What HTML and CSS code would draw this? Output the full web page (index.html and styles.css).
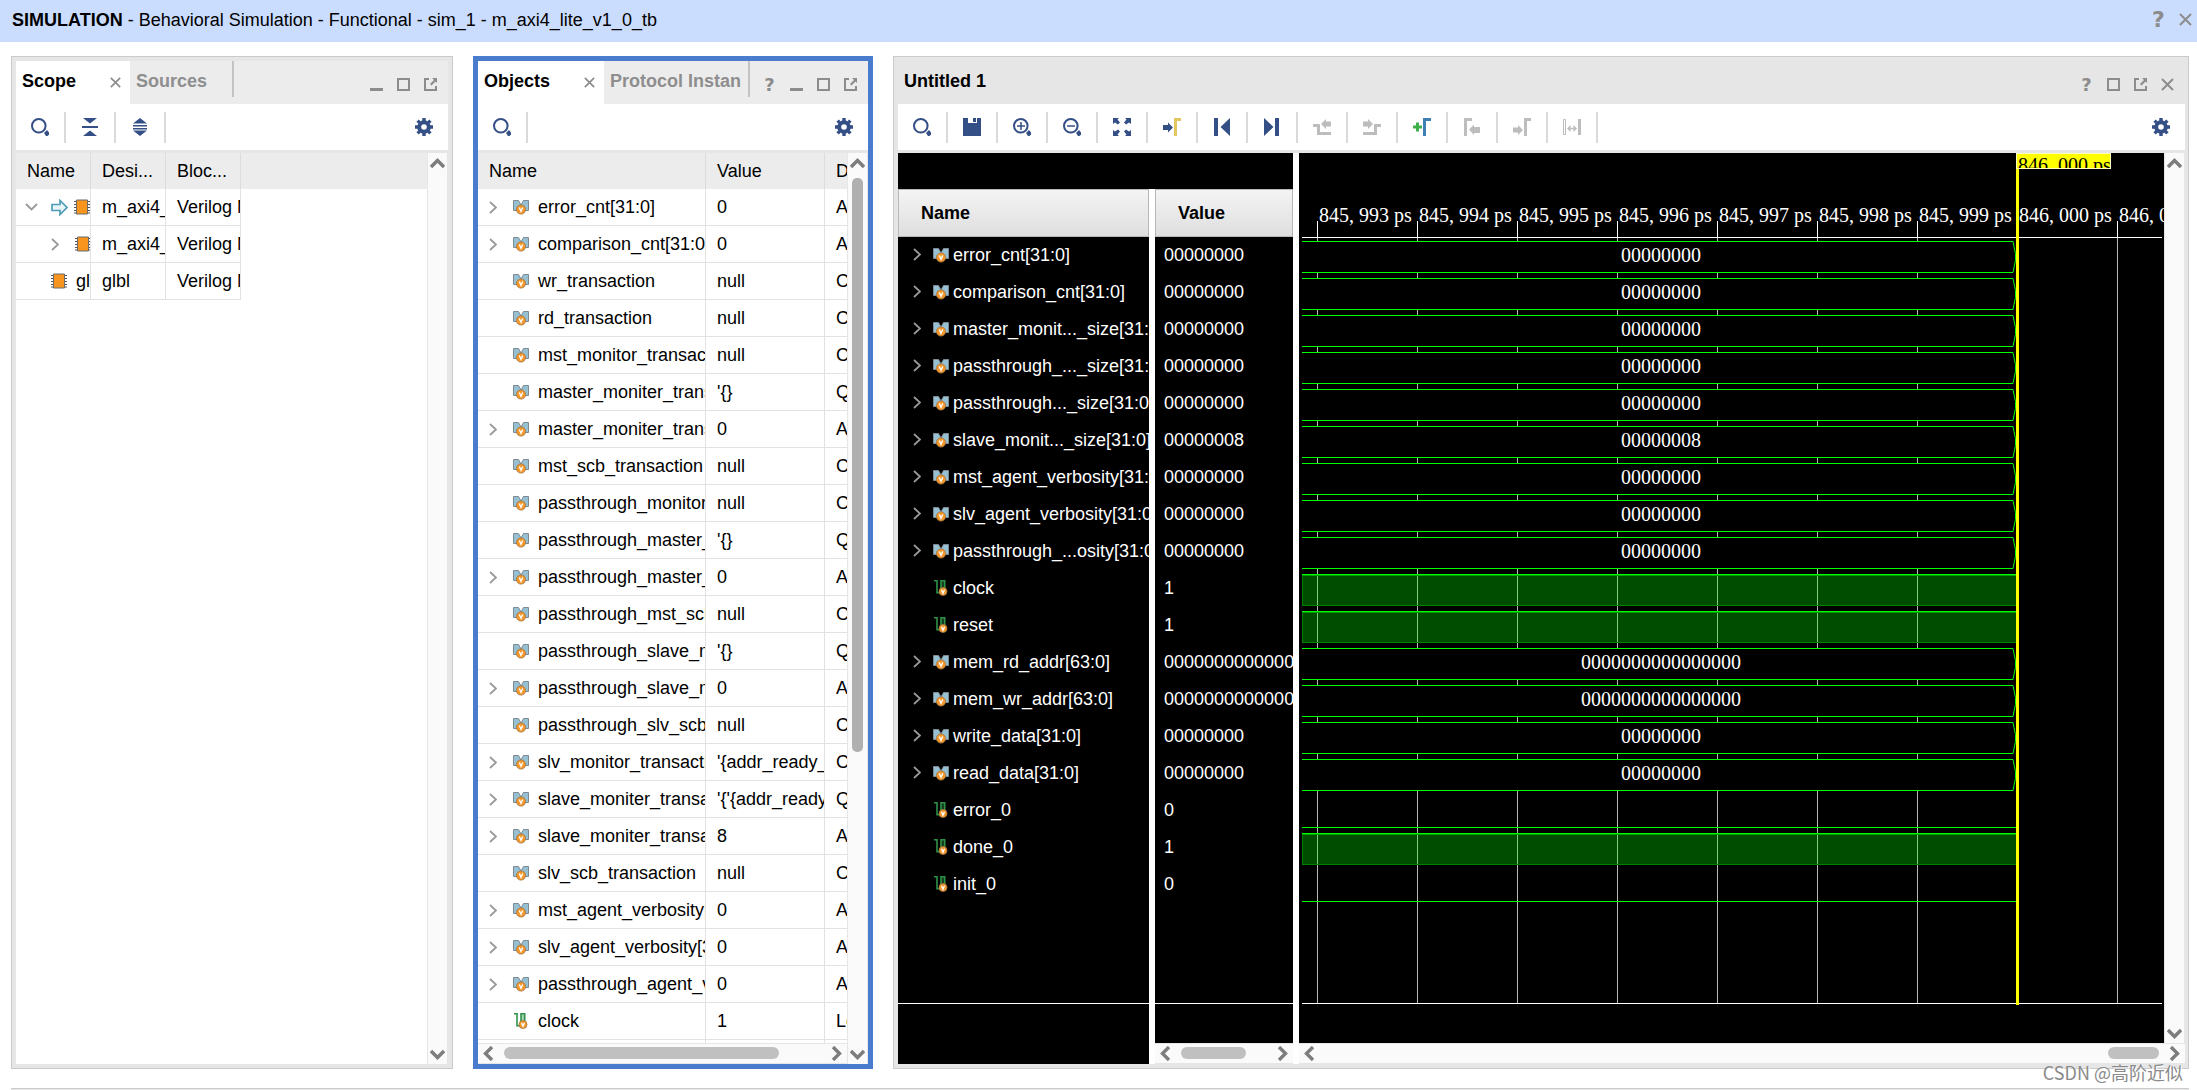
FILE: index.html
```html
<!DOCTYPE html>
<html lang="en">
<head>
<meta charset="utf-8">
<title>Behavioral Simulation - sim_1</title>
<link rel="stylesheet" href="styles.css">
</head>
<body>
<svg class="defs" aria-hidden="true">
  <symbol id="search" viewBox="0 0 18 18"><circle cx="7.800" cy="7.800" r="6.800" fill="none" stroke="currentColor" stroke-width="2"/><path d="M13 15l3-3 2 2.500v2l-1.500 1.500h-1.500z" fill="currentColor"/></symbol>
  <symbol id="zoomin" viewBox="0 0 18 18"><use href="#search"/><path d="M4 8h8M8 4v8" stroke="currentColor" stroke-width="1.500"/></symbol>
  <symbol id="zoomout" viewBox="0 0 18 18"><use href="#search"/><path d="M4 8h8" stroke="currentColor" stroke-width="1.500"/></symbol>
  <symbol id="collapse" viewBox="0 0 18 18"><path d="M2 0h14L9 5.500zM1 8h16v2H1zM2 18h14l-7-5.500z" fill="currentColor"/></symbol>
  <symbol id="expand" viewBox="0 0 18 18"><path d="M2 5.500h14L9 0zM2 7h14v1.500H2zM2 10h14v1.500H2zM2 12.500h14L9 18z" fill="currentColor"/></symbol>
  <symbol id="gear" viewBox="0 0 18 18"><circle cx="9" cy="9" r="4.800" fill="none" stroke="currentColor" stroke-width="4"/><path d="M9 0v3M9 15v3M0 9h3M15 9h3M2.600 2.600l2 2M13.400 13.400l2 2M2.600 15.400l2-2M13.400 4.600l2-2" stroke="currentColor" stroke-width="3.400"/></symbol>
  <symbol id="save" viewBox="0 0 18 18"><path d="M0 0h5v5h9V0h4v18H0zM10 0h3v4h-3z" fill="currentColor"/></symbol>
  <symbol id="fit" viewBox="0 0 18 18"><path d="M0 0h6L4.500 1.500 7 4.500 5 6.500 2 4.500 0 6zM18 0v6l-2-1.500L13 6.500l-2-2 2.500-3L12 0zM0 18v-6l2 1.500L5 11.500l2 2-2.500 3L6 18zM18 18h-6l1.500-1.500-2.500-3 2-2 3 2 2-1.500z" fill="currentColor"/></symbol>
  <symbol id="tocursor" viewBox="0 0 18 18"><path d="M0 7h5V4.500L10 9.500 5 14.500V12H0z" fill="currentColor"/><path d="M11 0h7v3h-4v15h-3z" fill="#e2c660"/></symbol>
  <symbol id="first" viewBox="0 0 18 18"><path d="M1 0h4v18H1zM17 0v18L7.500 9z" fill="currentColor"/></symbol>
  <symbol id="last" viewBox="0 0 18 18"><path d="M12 0h4v18h-4zM1 0v18l9.500-9z" fill="currentColor"/></symbol>
  <symbol id="prevtr" viewBox="0 0 18 18"><path d="M0 7.500h5.500v8H18" fill="none" stroke="currentColor" stroke-width="3"/><path d="M8 6l5-5v2.500h5v5h-5V11z" fill="currentColor"/></symbol>
  <symbol id="nexttr" viewBox="0 0 18 18"><path d="M0 15.500h12.500v-8H18" fill="none" stroke="currentColor" stroke-width="3"/><path d="M10 6L5 1v2.500H0v5h5V11z" fill="currentColor"/></symbol>
  <symbol id="addmark" viewBox="0 0 18 18"><path d="M0 9h9M4.500 4.500v9" stroke="#3fb04a" stroke-width="3"/><path d="M10 0h8v3h-5v15h-3z" fill="#3f80b4"/></symbol>
  <symbol id="prevmark" viewBox="0 0 18 18"><path d="M1 0h8v3H4v15H1zM6 11.500l5-5V9h6v6h-6v2z" fill="currentColor"/></symbol>
  <symbol id="nextmark" viewBox="0 0 18 18"><path d="M11 0h7v3h-4v15h-3zM10 12L5 7v2.500H0v5h5V17z" fill="currentColor"/></symbol>
  <symbol id="swap" viewBox="0 0 18 18"><path d="M.5 1.500h2v15h-2z" fill="none" stroke="currentColor"/><path d="M15 1h3v16h-3zM4 10.500l3.500-3.500v2.700h3V7l3.500 3.500-3.500 3.500v-2.700h-3V14z" fill="currentColor"/></symbol>
  <symbol id="min" viewBox="0 0 13 13"><path d="M0 10h13v3H0z" fill="currentColor"/></symbol>
  <symbol id="max" viewBox="0 0 13 13"><path d="M1 1h11v11H1z" fill="none" stroke="currentColor" stroke-width="2"/></symbol>
  <symbol id="float" viewBox="0 0 13 13"><path d="M5 1H1v11h11V8" fill="none" stroke="currentColor" stroke-width="2"/><path d="M8 0h5v5l-1.500-1.500-4 4L6 6l4-4z" fill="currentColor"/></symbol>
  <symbol id="close" viewBox="0 0 13 13"><path d="M1 1l11 11M12 1L1 12" stroke="currentColor" stroke-width="2"/></symbol>
  <symbol id="up" viewBox="0 0 15 15"><path d="M1 11l6.500-6.500L14 11" fill="none" stroke="currentColor" stroke-width="3.400"/></symbol>
  <symbol id="down" viewBox="0 0 15 15"><path d="M1 5l6.500 6.500L14 5" fill="none" stroke="currentColor" stroke-width="3.400"/></symbol>
  <symbol id="left" viewBox="0 0 15 15"><path d="M11 1L4.500 7.500 11 14" fill="none" stroke="currentColor" stroke-width="3.400"/></symbol>
  <symbol id="right" viewBox="0 0 15 15"><path d="M4 1l6.500 6.500L4 14" fill="none" stroke="currentColor" stroke-width="3.400"/></symbol>
  <symbol id="tw" viewBox="0 0 8 13"><path d="M1 1l6 5.500L1 12" fill="none" stroke="currentColor" stroke-width="1.800"/></symbol>
  <symbol id="twd" viewBox="0 0 13 8"><path d="M1 1l5.500 5.500L12 1" fill="none" stroke="currentColor" stroke-width="1.800"/></symbol>
  <symbol id="arrow" viewBox="0 0 17 17"><path d="M1 5.500h8v-4l7 7-7 7v-4H1z" fill="#e8f6fa" stroke="#4f9cb8" stroke-width="1.700"/></symbol>
  <symbol id="chip" viewBox="0 0 16 16"><path d="M0 2.500h16M0 5.500h16M0 8.500h16M0 11.500h16M0 14h16" stroke="#555"/><path d="M2.500 1h11v14h-11z" fill="#f7951f" stroke="#6b6b6b"/></symbol>
  <symbol id="bus" viewBox="0 0 16 16"><path d="M.5 1.500h5L8 6l-1 5.500H.5zM15.500 1.500h-5L8 6l1 5.500h6.500z" fill="#97c0d3" stroke="#7d8a93"/><circle cx="8" cy="10.500" r="4.600" fill="#f5982c" stroke="#a07440" stroke-width=".8"/><path d="M6.300 8.500L8 12.300l1.700-3.800" fill="none" stroke="#fff" stroke-width="1.400"/></symbol>
  <symbol id="bit" viewBox="0 0 16 16"><path d="M8 1h3.500v9H8z" fill="#2f9148" opacity=".4"/><path d="M1 .8h3v12h4v-12h3.700v10" fill="none" stroke="#2f9148" stroke-width="1.600"/><circle cx="10" cy="11.500" r="4" fill="#f5982c" stroke="#a07440" stroke-width=".8"/><path d="M8.500 9.800l1.500 3.500 1.500-3.500" fill="none" stroke="#fff" stroke-width="1.300"/></symbol>
  <symbol id="busend" viewBox="0 0 4 32"><path d="M0 .5h1l1 5 1.500 7V16v3.500L2 26.500l-1 5H0" fill="#000" stroke="#0f0"/></symbol>
</svg>

<header class="titlebar">
  <h1><b>SIMULATION</b> - Behavioral Simulation - Functional - sim_1 - m_axi4_lite_v1_0_tb</h1>
  <div class="winbtns"><button class="help big" aria-label="Help">?</button><button aria-label="Close"><svg><use href="#close"/></svg></button></div>
</header>

<main class="workspace">
  <section class="panel">
    <div class="tabs">
      <button class="tab active scope-tab">Scope<svg class="x"><use href="#close"/></svg></button>
      <button class="tab sources-tab">Sources</button>
      <div class="winbtns"><button aria-label="Minimize"><svg><use href="#min"/></svg></button><button aria-label="Maximize"><svg><use href="#max"/></svg></button><button aria-label="Float"><svg><use href="#float"/></svg></button></div>
    </div>
    <div class="toolbar">
      <button aria-label="Search"><svg><use href="#search"/></svg></button><button aria-label="Collapse all"><svg><use href="#collapse"/></svg></button><button aria-label="Expand all"><svg><use href="#expand"/></svg></button>
      <button class="settings" aria-label="Settings"><svg><use href="#gear"/></svg></button>
    </div>
    <div class="content">
      <div class="view">
        <table class="grid">
          <colgroup><col class="c-scope"><col class="c-scope"><col class="c-scope"><col></colgroup>
          <thead><tr><th>Name</th><th>Desi...</th><th>Bloc...</th><td></td></tr></thead>
          <tbody>
            <tr><td class="tree"><div><button class="slot"><svg class="twd"><use href="#twd"/></svg></button><svg class="ar"><use href="#arrow"/></svg><svg class="ic"><use href="#chip"/></svg></div></td><td>m_axi4_lite</td><td>Verilog Module</td><td class="rest"></td></tr>
            <tr><td class="tree"><div class="lvl1"><button class="slot"><svg class="tw"><use href="#tw"/></svg></button><svg class="ic"><use href="#chip"/></svg></div></td><td>m_axi4_lite</td><td>Verilog Module</td><td class="rest"></td></tr>
            <tr><td class="tree"><div><span class="slot"></span><svg class="ic"><use href="#chip"/></svg>glbl</div></td><td>glbl</td><td>Verilog Module</td><td class="rest"></td></tr>
          </tbody>
        </table>
      </div>
      <div class="sb v"><button aria-label="Up"><svg><use href="#up"/></svg></button><div class="track"></div><button aria-label="Down"><svg><use href="#down"/></svg></button></div>
    </div>
  </section>

  <section class="panel focused">
    <div class="tabs">
      <button class="tab active objects-tab">Objects<svg class="x"><use href="#close"/></svg></button>
      <button class="tab protocol-tab">Protocol Instan</button>
      <div class="winbtns"><button class="help" aria-label="Help">?</button><button aria-label="Minimize"><svg><use href="#min"/></svg></button><button aria-label="Maximize"><svg><use href="#max"/></svg></button><button aria-label="Float"><svg><use href="#float"/></svg></button></div>
    </div>
    <div class="toolbar">
      <button aria-label="Search"><svg><use href="#search"/></svg></button>
      <button class="settings" aria-label="Settings"><svg><use href="#gear"/></svg></button>
    </div>
    <div class="content">
      <div class="stack">
        <div class="view">
          <table class="grid objects">
            <colgroup><col class="c-name"><col class="c-value"><col></colgroup>
            <thead><tr><th>Name</th><th>Value</th><th>Data Type</th></tr></thead>
            <tbody>
              <tr><td class="sig"><div><button class="slot"><svg class="tw"><use href="#tw"/></svg></button><svg class="ic"><use href="#bus"/></svg>error_cnt[31:0]</div></td><td>0</td><td>Array</td></tr>
              <tr><td class="sig"><div><button class="slot"><svg class="tw"><use href="#tw"/></svg></button><svg class="ic"><use href="#bus"/></svg>comparison_cnt[31:0]</div></td><td>0</td><td>Array</td></tr>
              <tr><td class="sig"><div><span class="slot"></span><svg class="ic"><use href="#bus"/></svg>wr_transaction</div></td><td>null</td><td>Class</td></tr>
              <tr><td class="sig"><div><span class="slot"></span><svg class="ic"><use href="#bus"/></svg>rd_transaction</div></td><td>null</td><td>Class</td></tr>
              <tr><td class="sig"><div><span class="slot"></span><svg class="ic"><use href="#bus"/></svg>mst_monitor_transact</div></td><td>null</td><td>Class</td></tr>
              <tr><td class="sig"><div><span class="slot"></span><svg class="ic"><use href="#bus"/></svg>master_moniter_trans</div></td><td>'{}</td><td>Queue</td></tr>
              <tr><td class="sig"><div><button class="slot"><svg class="tw"><use href="#tw"/></svg></button><svg class="ic"><use href="#bus"/></svg>master_moniter_trans</div></td><td>0</td><td>Array</td></tr>
              <tr><td class="sig"><div><span class="slot"></span><svg class="ic"><use href="#bus"/></svg>mst_scb_transaction</div></td><td>null</td><td>Class</td></tr>
              <tr><td class="sig"><div><span class="slot"></span><svg class="ic"><use href="#bus"/></svg>passthrough_monitor</div></td><td>null</td><td>Class</td></tr>
              <tr><td class="sig"><div><span class="slot"></span><svg class="ic"><use href="#bus"/></svg>passthrough_master_</div></td><td>'{}</td><td>Queue</td></tr>
              <tr><td class="sig"><div><button class="slot"><svg class="tw"><use href="#tw"/></svg></button><svg class="ic"><use href="#bus"/></svg>passthrough_master_</div></td><td>0</td><td>Array</td></tr>
              <tr><td class="sig"><div><span class="slot"></span><svg class="ic"><use href="#bus"/></svg>passthrough_mst_scb</div></td><td>null</td><td>Class</td></tr>
              <tr><td class="sig"><div><span class="slot"></span><svg class="ic"><use href="#bus"/></svg>passthrough_slave_m</div></td><td>'{}</td><td>Queue</td></tr>
              <tr><td class="sig"><div><button class="slot"><svg class="tw"><use href="#tw"/></svg></button><svg class="ic"><use href="#bus"/></svg>passthrough_slave_m</div></td><td>0</td><td>Array</td></tr>
              <tr><td class="sig"><div><span class="slot"></span><svg class="ic"><use href="#bus"/></svg>passthrough_slv_scb</div></td><td>null</td><td>Class</td></tr>
              <tr><td class="sig"><div><button class="slot"><svg class="tw"><use href="#tw"/></svg></button><svg class="ic"><use href="#bus"/></svg>slv_monitor_transacti</div></td><td>'{addr_ready_</td><td>Class</td></tr>
              <tr><td class="sig"><div><button class="slot"><svg class="tw"><use href="#tw"/></svg></button><svg class="ic"><use href="#bus"/></svg>slave_moniter_transa</div></td><td>'{'{addr_ready</td><td>Queue</td></tr>
              <tr><td class="sig"><div><button class="slot"><svg class="tw"><use href="#tw"/></svg></button><svg class="ic"><use href="#bus"/></svg>slave_moniter_transa</div></td><td>8</td><td>Array</td></tr>
              <tr><td class="sig"><div><span class="slot"></span><svg class="ic"><use href="#bus"/></svg>slv_scb_transaction</div></td><td>null</td><td>Class</td></tr>
              <tr><td class="sig"><div><button class="slot"><svg class="tw"><use href="#tw"/></svg></button><svg class="ic"><use href="#bus"/></svg>mst_agent_verbosity[</div></td><td>0</td><td>Array</td></tr>
              <tr><td class="sig"><div><button class="slot"><svg class="tw"><use href="#tw"/></svg></button><svg class="ic"><use href="#bus"/></svg>slv_agent_verbosity[3</div></td><td>0</td><td>Array</td></tr>
              <tr><td class="sig"><div><button class="slot"><svg class="tw"><use href="#tw"/></svg></button><svg class="ic"><use href="#bus"/></svg>passthrough_agent_v</div></td><td>0</td><td>Array</td></tr>
              <tr><td class="sig"><div><span class="slot"></span><svg class="ic"><use href="#bit"/></svg>clock</div></td><td>1</td><td>Logic</td></tr>
              <tr><td></td><td></td><td></td></tr>
            </tbody>
          </table>
        </div>
        <div class="sb h"><button aria-label="Left"><svg><use href="#left"/></svg></button><div class="track"><div class="thumb" style="width:84%"></div></div><button aria-label="Right"><svg><use href="#right"/></svg></button></div>
      </div>
      <div class="sb v"><button aria-label="Up"><svg><use href="#up"/></svg></button><div class="track"><div class="thumb" style="height:66%"></div></div><button aria-label="Down"><svg><use href="#down"/></svg></button></div>
    </div>
  </section>

  <section class="panel viewer">
    <div class="tabs plain">
      <h2>Untitled 1</h2>
      <div class="winbtns"><button class="help" aria-label="Help">?</button><button aria-label="Maximize"><svg><use href="#max"/></svg></button><button aria-label="Float"><svg><use href="#float"/></svg></button><button aria-label="Close"><svg><use href="#close"/></svg></button></div>
    </div>
    <div class="toolbar">
      <button aria-label="Search"><svg><use href="#search"/></svg></button><button aria-label="Save"><svg><use href="#save"/></svg></button><button aria-label="Zoom in"><svg><use href="#zoomin"/></svg></button><button aria-label="Zoom out"><svg><use href="#zoomout"/></svg></button><button aria-label="Zoom fit"><svg><use href="#fit"/></svg></button><button aria-label="Go to cursor"><svg><use href="#tocursor"/></svg></button><button aria-label="Go to start"><svg><use href="#first"/></svg></button><button aria-label="Go to end"><svg><use href="#last"/></svg></button><button class="off" aria-label="Previous transition"><svg><use href="#prevtr"/></svg></button><button class="off" aria-label="Next transition"><svg><use href="#nexttr"/></svg></button><button aria-label="Add marker"><svg><use href="#addmark"/></svg></button><button class="off" aria-label="Previous marker"><svg><use href="#prevmark"/></svg></button><button class="off" aria-label="Next marker"><svg><use href="#nextmark"/></svg></button><button class="off" aria-label="Swap cursors"><svg><use href="#swap"/></svg></button>
      <button class="settings" aria-label="Settings"><svg><use href="#gear"/></svg></button>
    </div>
    <div class="content wave">
      <div class="signals">
        <div class="names">
          <table class="dark">
            <thead><tr><th>Name</th></tr></thead>
            <tbody>
              <tr><td><div><button class="slot"><svg class="tw"><use href="#tw"/></svg></button><svg class="ic"><use href="#bus"/></svg>error_cnt[31:0]</div></td></tr>
              <tr><td><div><button class="slot"><svg class="tw"><use href="#tw"/></svg></button><svg class="ic"><use href="#bus"/></svg>comparison_cnt[31:0]</div></td></tr>
              <tr><td><div><button class="slot"><svg class="tw"><use href="#tw"/></svg></button><svg class="ic"><use href="#bus"/></svg>master_monit..._size[31:0]</div></td></tr>
              <tr><td><div><button class="slot"><svg class="tw"><use href="#tw"/></svg></button><svg class="ic"><use href="#bus"/></svg>passthrough_..._size[31:0]</div></td></tr>
              <tr><td><div><button class="slot"><svg class="tw"><use href="#tw"/></svg></button><svg class="ic"><use href="#bus"/></svg>passthrough..._size[31:0]</div></td></tr>
              <tr><td><div><button class="slot"><svg class="tw"><use href="#tw"/></svg></button><svg class="ic"><use href="#bus"/></svg>slave_monit..._size[31:0]</div></td></tr>
              <tr><td><div><button class="slot"><svg class="tw"><use href="#tw"/></svg></button><svg class="ic"><use href="#bus"/></svg>mst_agent_verbosity[31:0]</div></td></tr>
              <tr><td><div><button class="slot"><svg class="tw"><use href="#tw"/></svg></button><svg class="ic"><use href="#bus"/></svg>slv_agent_verbosity[31:0]</div></td></tr>
              <tr><td><div><button class="slot"><svg class="tw"><use href="#tw"/></svg></button><svg class="ic"><use href="#bus"/></svg>passthrough_...osity[31:0]</div></td></tr>
              <tr><td><div><span class="slot"></span><svg class="ic"><use href="#bit"/></svg>clock</div></td></tr>
              <tr><td><div><span class="slot"></span><svg class="ic"><use href="#bit"/></svg>reset</div></td></tr>
              <tr><td><div><button class="slot"><svg class="tw"><use href="#tw"/></svg></button><svg class="ic"><use href="#bus"/></svg>mem_rd_addr[63:0]</div></td></tr>
              <tr><td><div><button class="slot"><svg class="tw"><use href="#tw"/></svg></button><svg class="ic"><use href="#bus"/></svg>mem_wr_addr[63:0]</div></td></tr>
              <tr><td><div><button class="slot"><svg class="tw"><use href="#tw"/></svg></button><svg class="ic"><use href="#bus"/></svg>write_data[31:0]</div></td></tr>
              <tr><td><div><button class="slot"><svg class="tw"><use href="#tw"/></svg></button><svg class="ic"><use href="#bus"/></svg>read_data[31:0]</div></td></tr>
              <tr><td><div><span class="slot"></span><svg class="ic"><use href="#bit"/></svg>error_0</div></td></tr>
              <tr><td><div><span class="slot"></span><svg class="ic"><use href="#bit"/></svg>done_0</div></td></tr>
              <tr><td><div><span class="slot"></span><svg class="ic"><use href="#bit"/></svg>init_0</div></td></tr>
            </tbody>
          </table>
          <div class="rule"></div>
          <div class="foot tall"></div>
        </div>
        <div class="values">
          <table class="dark">
            <thead><tr><th>Value</th></tr></thead>
            <tbody>
              <tr><td>00000000</td></tr>
              <tr><td>00000000</td></tr>
              <tr><td>00000000</td></tr>
              <tr><td>00000000</td></tr>
              <tr><td>00000000</td></tr>
              <tr><td>00000008</td></tr>
              <tr><td>00000000</td></tr>
              <tr><td>00000000</td></tr>
              <tr><td>00000000</td></tr>
              <tr><td>1</td></tr>
              <tr><td>1</td></tr>
              <tr><td>0000000000000000</td></tr>
              <tr><td>0000000000000000</td></tr>
              <tr><td>00000000</td></tr>
              <tr><td>00000000</td></tr>
              <tr><td>0</td></tr>
              <tr><td>1</td></tr>
              <tr><td>0</td></tr>
            </tbody>
          </table>
          <div class="rule"></div>
          <div class="foot"></div>
          <div class="sb h"><button aria-label="Left"><svg><use href="#left"/></svg></button><div class="track"><div class="thumb" style="width:68%"></div></div><button aria-label="Right"><svg><use href="#right"/></svg></button></div>
        </div>
      </div>
      <div class="stack">
        <div class="plotrow">
          <div class="plot">
            <div class="ruler">
              <span><i>845,</i>993 ps</span><span><i>845,</i>994 ps</span><span><i>845,</i>995 ps</span><span><i>845,</i>996 ps</span><span><i>845,</i>997 ps</span><span><i>845,</i>998 ps</span><span><i>845,</i>999 ps</span><span><i>846,</i>000 ps</span><span><i>846,</i>001 ps</span>
            </div>
            <div class="lanes">
              <div class="lane bus"><span>00000000</span><svg><use href="#busend"/></svg></div>
              <div class="lane bus"><span>00000000</span><svg><use href="#busend"/></svg></div>
              <div class="lane bus"><span>00000000</span><svg><use href="#busend"/></svg></div>
              <div class="lane bus"><span>00000000</span><svg><use href="#busend"/></svg></div>
              <div class="lane bus"><span>00000000</span><svg><use href="#busend"/></svg></div>
              <div class="lane bus"><span>00000008</span><svg><use href="#busend"/></svg></div>
              <div class="lane bus"><span>00000000</span><svg><use href="#busend"/></svg></div>
              <div class="lane bus"><span>00000000</span><svg><use href="#busend"/></svg></div>
              <div class="lane bus"><span>00000000</span><svg><use href="#busend"/></svg></div>
              <div class="lane high"></div>
              <div class="lane high"></div>
              <div class="lane bus"><span>0000000000000000</span><svg><use href="#busend"/></svg></div>
              <div class="lane bus"><span>0000000000000000</span><svg><use href="#busend"/></svg></div>
              <div class="lane bus"><span>00000000</span><svg><use href="#busend"/></svg></div>
              <div class="lane bus"><span>00000000</span><svg><use href="#busend"/></svg></div>
              <div class="lane low"></div>
              <div class="lane high"></div>
              <div class="lane low"></div>
            </div>
            <div class="foot"></div>
            <div class="cursor"></div>
            <div class="cursor-label"><i>846,</i>000 ps</div>
          </div>
          <div class="sb v"><button aria-label="Up"><svg><use href="#up"/></svg></button><div class="track"></div><button aria-label="Down"><svg><use href="#down"/></svg></button></div>
        </div>
        <div class="sb h"><button aria-label="Left"><svg><use href="#left"/></svg></button><div class="track end"><div class="thumb" style="width:6%"></div></div><button aria-label="Right"><svg><use href="#right"/></svg></button></div>
      </div>
    </div>
  </section>
</main>
<div class="next-panel"></div>
<div class="watermark">CSDN @高阶近似</div>
</body>
</html>
```
FILE: styles.css
```css
* { box-sizing: border-box; }

body {
  margin: 0;
  height: 100vh;
  display: flex;
  flex-direction: column;
  overflow: hidden;
  background: #fff;
  color: #000;
  font: 18px/22px "Liberation Sans", Arial, sans-serif;
}

button {
  border: 0;
  padding: 0;
  margin: 0;
  background: none;
  color: inherit;
  font: inherit;
}

svg { display: block; flex: none; }
.defs { position: absolute; width: 0; height: 0; }

/* Title bar */
.titlebar {
  display: flex;
  justify-content: space-between;
  align-items: center;
  height: 42px;
  flex: none;
  padding: 0 5px 3px 12px;
  background: #cbddfe;
}
.titlebar h1 { margin: 0; font-size: 18px; font-weight: 400; white-space: nowrap; }

.winbtns { display: flex; align-items: center; gap: 14px; color: #8c8c8c; }
.winbtns button, .winbtns svg { width: 13px; height: 13px; }
.winbtns .help { font: bold 18px/13px "DejaVu Sans", sans-serif; }
.winbtns .big { font-size: 22px; }

/* Panels */
.workspace {
  flex: 1;
  min-height: 0;
  display: grid;
  grid-template-columns: 442fr 400fr 1296fr;
  grid-template-rows: minmax(0, 1fr);
  gap: 20px;
  padding: 14px 8px 19px 11px;
}
.panel {
  display: flex;
  flex-direction: column;
  min-width: 0;
  border: 1px solid #cbcbcb;
  padding: 4px;
  background: #e6e6e6;
}
.panel.focused { border: 5px solid #4a7ccd; padding: 0; }
.panel.viewer { padding-right: 3px; }
.next-panel {
  flex: none;
  height: 2px;
  margin: 0 8px 0 11px;
  border-top: 1px solid #cbcbcb;
  background: #e6e6e6;
}

.tabs { display: flex; height: 43px; flex: none; background: #ececec; }
.tabs.plain { background: #e6e6e6; }
.tabs .winbtns { margin-left: auto; padding: 4px 11px 0 0; }
.tabs h2 { margin: 0; padding: 9px 6px; font-size: 18px; }
.tab {
  display: flex;
  align-items: center;
  justify-content: space-between;
  padding: 0 9px 4px 6px;
  color: #8e8e8e;
  font-weight: 700;
  white-space: nowrap;
}
.tab.active { background: #fff; color: #000; }
.tab .x { width: 11px; height: 11px; margin-top: 4px; color: #8c8c8c; }
.scope-tab { width: 114px; }
.objects-tab { width: 126px; }
.sources-tab, .protocol-tab { height: 36px; padding-bottom: 0; padding-top: 3px; border-right: 2px solid #c4c4c4; }
.sources-tab { width: 104px; }
.protocol-tab { width: 146px; }

.toolbar { display: flex; align-items: center; height: 46px; flex: none; margin-bottom: 3px; background: #fff; color: #344f86; }
.toolbar button { display: flex; justify-content: center; width: 50px; height: 31px; align-items: center; border-right: 2px solid #dadada; }
.toolbar svg { width: 18px; height: 18px; }
.toolbar .off { color: #bdbdbd; }
.toolbar .settings { width: 48px; margin-left: auto; border: 0; }

.content { flex: 1; min-height: 0; display: flex; background: #fff; }
.view { flex: 1; min-width: 0; min-height: 0; overflow: hidden; }
.stack { flex: 1; min-width: 0; display: flex; flex-direction: column; }

/* Tables */
table { width: 100%; table-layout: fixed; border-collapse: separate; border-spacing: 0; }
th, td { padding: 0 0 0 11px; overflow: hidden; white-space: nowrap; text-align: left; }
td > div { display: flex; align-items: center; overflow: hidden; }
.grid th, .grid thead td { height: 36px; background: #ececec; font-weight: 400; }
.grid th { border-right: 1px solid #dcdcdc; }
.grid tbody td { height: 37px; border-right: 1px solid #e2e2e2; border-bottom: 1px solid #e2e2e2; }
.grid tbody .rest { border: 0; }
.objects th:last-child, .objects td:last-child { border-right: 0; }
.grid .tree, .grid .sig { padding-left: 0; }
.c-scope { width: 75px; }
.c-name { width: 228px; }
.c-value { width: 119px; }

.slot { width: 35px; flex: none; color: #999; }
.slot .tw { margin-left: 11px; }
.slot .twd { margin-left: 9px; }
.tw { width: 8px; height: 13px; }
.twd { width: 13px; height: 8px; }
.ic { width: 16px; height: 16px; margin-right: 9px; }
.ar { width: 17px; height: 17px; margin-right: 6px; }
.lvl1 { padding-left: 24px; }

/* Scrollbars */
.sb { display: flex; flex: none; background: #fafafa; color: #7d7d7d; }
.sb button { display: flex; align-items: center; justify-content: center; flex: none; }
.sb svg { width: 15px; height: 15px; }
.sb .track { flex: 1; min-width: 0; min-height: 0; display: flex; }
.sb.v { flex-direction: column; width: 21px; border: 0 solid #e6e6e6; border-width: 0 1px; }
.sb.v button { height: 21px; }
.sb.v .thumb { width: 12px; margin: 4px; border-radius: 5px; background: #b0b0b0; }
.sb.h { height: 21px; border: 0 solid #e6e6e6; border-width: 1px 0; }
.sb.h button { width: 21px; }
.sb.h .thumb { height: 12px; margin: 3px 5px; border-radius: 6px; background: #c0c0c0; }
.sb.h .end { justify-content: flex-end; }

/* Waveform */
.wave { gap: 6px; }
.signals { display: flex; gap: 6px; flex: none; border-top: 36px solid #000; }
.names, .values { display: flex; flex-direction: column; }
.names { width: 251px; }
.values { width: 138px; }
.dark { flex: none; background: #000; color: #fff; }
.dark th {
  height: 48px;
  padding-left: 22px;
  border: 1px solid #b8b8b8;
  background: linear-gradient(#f4f4f4, #dededf);
  color: #000;
}
.dark td { height: 37px; padding: 0 0 2px 9px; }
.names td { padding-left: 0; }
.names .slot .tw { margin-left: 15px; }
.names .ic { margin-right: 4px; }
.rule { flex: 1; min-height: 0; background: #000; border-bottom: 1px solid #fff; }
.foot { height: 39px; flex: none; background: #000; }
.foot.tall { height: 60px; }

.plotrow { flex: 1; min-height: 0; display: flex; }
.plot {
  position: relative;
  flex: 1;
  min-width: 0;
  display: flex;
  flex-direction: column;
  overflow: hidden;
  background: #000;
  color: #fff;
  font: 20px/22px "Liberation Serif", "Times New Roman", serif;
}
.plot i { display: inline-block; width: 40px; font-style: normal; }
.ruler {
  display: flex;
  flex: none;
  height: 84px;
  margin-left: 3px;
  padding: 51px 0 0 17px;
  background: linear-gradient(90deg, #fff 1px, transparent 1px) 15px 100% / 100px 16px repeat-x;
}
.ruler span { flex: none; width: 100px; white-space: nowrap; }
.lanes {
  flex: 1;
  min-height: 0;
  display: flex;
  flex-direction: column;
  gap: 5px;
  margin: 0 2px 0 3px;
  padding-top: 3px;
  border: 0 solid #fff;
  border-width: 1px 0;
  background: linear-gradient(90deg, #b8b8b8 1px, transparent 1px) 15px 0 / 100px 100% repeat-x;
}
.lane { flex: none; width: 714px; height: 32px; }
.bus { display: flex; }
.bus span {
  flex: 1;
  padding-left: 8px;
  border: 0 solid #0f0;
  border-width: 1px 0;
  background: #000;
  line-height: 26px;
  text-align: center;
}
.bus svg { width: 4px; height: 32px; }
.high {
  border-top: 1px solid #0f0;
  background: rgba(0, 255, 0, 0.3);
  box-shadow: inset 1px -1px #008000, inset 0 1px #00a000;
}
.low { border-bottom: 1px solid #0f0; }
.cursor { position: absolute; left: 717px; top: 16px; bottom: 38px; width: 3px; background: #ff0; }
.cursor-label {
  position: absolute;
  left: 717px;
  top: 0;
  width: 95px;
  height: 16px;
  padding: 0 0 0 1px;
  overflow: hidden;
  border: 1px solid #ffffc0;
  background: #ff0;
  color: #000;
  white-space: nowrap;
}

.watermark {
  position: absolute;
  right: 14px;
  bottom: 6px;
  color: #8a8a8a;
  font: 18px/24px "Noto Sans CJK SC", sans-serif;
  text-shadow: 1px 1px #fff;
}
```
